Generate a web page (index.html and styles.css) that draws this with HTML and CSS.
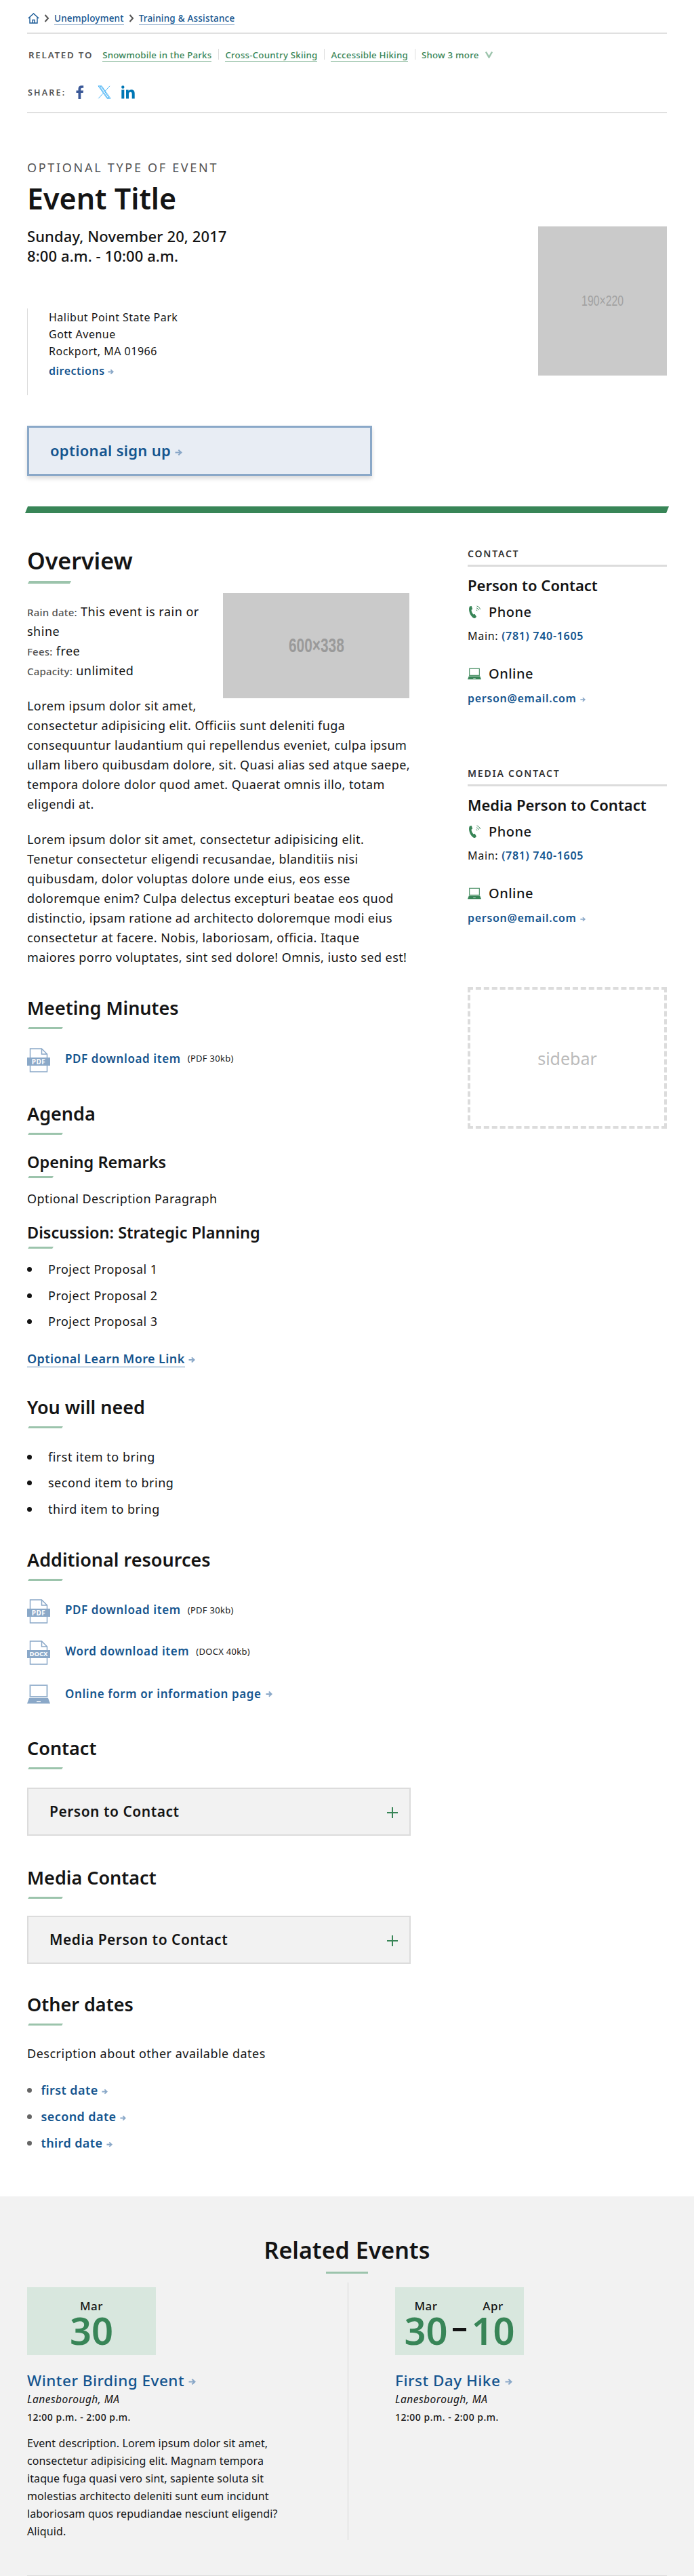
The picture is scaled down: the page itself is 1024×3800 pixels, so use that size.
FILE: index.html
```html
<!DOCTYPE html>
<html lang="en">
<head>
    <meta charset="UTF-8">
    <meta name="viewport" content="width=device-width, initial-scale=1.0">
    <title>Event Title</title>
    <link rel="stylesheet" href="styles.css">
</head>
<body>
    <svg class="sprites" width="0" height="0" aria-hidden="true">
        <symbol id="arrow" viewBox="0 0 10 10">
            <path d="M5.500.8L10 5l-4.500 4.200-1.300-1.300L6 6H.5V4H6L4.200 2.100z" fill="#8aa8c8"/>
        </symbol>
        <symbol id="chev" viewBox="0 0 8 12">
            <path d="M1.500 1l4.500 5-4.500 5" fill="none" stroke="#555" stroke-width="2"/>
        </symbol>
        <symbol id="file" viewBox="0 0 34 36">
            <path d="M4.500 14V1h17l8 8v5M29.500 25v10h-25V25M21.500 1v8h8" fill="none" stroke="#8aa8c8" stroke-width="1.500"/>
            <rect x="0" y="14" width="34" height="12" fill="#8aa8c8"/>
        </symbol>
        <symbol id="laptop" viewBox="0 0 34 30">
            <path d="M3.500 1h27v19h-27zM5.500 3v15h23V3z" fill="currentColor" fill-rule="evenodd" opacity=".85"/>
            <path d="M3 21h28l3 8H0zM14 25.500v1.500h6v-1.500z" fill="currentColor" fill-rule="evenodd"/>
        </symbol>
        <symbol id="phone" viewBox="0 0 20 20">
            <path d="M3 1.500L5.800 1l1.400 4.600-1.700 1.200c.2 2.600 1.400 5 3.200 6.700l1.800-.7 2.500 4L11 19c-2 .6-4.500-1.500-6.400-4.500C2.500 11 1 5 3 1.500z" fill="#388557"/>
            <path d="M12.500 6.500c.8.300 1.300.9 1.500 1.700M13 3.800c1.700.5 2.700 1.700 3.200 3.300M13.500 1c2.600.7 4.300 2.500 5 5" fill="none" stroke="#388557" stroke-width="1"/>
        </symbol>
    </svg>

    <div class="top">
        <nav class="crumbs">
            <svg class="home" width="17" height="16" viewBox="0 0 17 16">
                <path d="M.8 8L8.500 1l7.700 7M3 6.500V15h11V6.500M7 15v-4.500h3V15" fill="none" stroke="#1a5a96" stroke-width="1.400"/>
            </svg>
            <svg class="chev" width="8" height="12"><use href="#chev"/></svg>
            <a href="#">Unemployment</a>
            <svg class="chev" width="8" height="12"><use href="#chev"/></svg>
            <a href="#">Training &amp; Assistance</a>
        </nav>
        <div class="related">
            <span class="related-label">RELATED TO</span>
            <a href="#">Snowmobile in the Parks</a>
            <a href="#">Cross-Country Skiing</a>
            <a href="#">Accessible Hiking</a>
            <span class="more">Show 3 more
                <svg width="11" height="11" viewBox="0 0 11 11"><path d="M1 1.500l4.500 8 4.500-8" fill="none" stroke="#9cc4ac" stroke-width="2.400"/></svg>
            </span>
        </div>
        <div class="share">
            <span class="share-label">SHARE:</span>
            <svg width="12" height="20" viewBox="0 0 12 20"><path d="M3.500 20V11H.5V7.500h3V5c0-3 1.800-4.700 4.500-4.700h3.200v3.400H9.300C7.800 3.700 7.300 4.400 7.300 5.500v2h3.800L10.600 11H7.300v9z" fill="#3b5998"/></svg>
            <svg class="share-x" width="20" height="20" viewBox="0 0 20 20"><path d="M1 .8h5l13 18.400h-5zM3 1.800l11.500 16.400h2.400L5.400 1.800zM18 .8l-7.300 8M8.300 11.500L1.300 19.200" fill="none" stroke="#1da1f2" stroke-width="0.800"/></svg>
            <svg width="20" height="20" viewBox="0 0 20 20"><path d="M.3 6.500h4v13h-4zM2.300.3a2.200 2.200 0 110 4.400 2.200 2.200 0 010-4.400zM7 6.500h3.700v1.800c.7-1.200 2-2.100 4-2.100 3.800 0 5 2.300 5 6v7.300h-4v-6.500c0-1.700-.4-3.200-2.100-3.200S11 11 11 12.900v6.600H7z" fill="#0077b5"/></svg>
        </div>
    </div>

    <header class="event-head">
        <div class="event-type">OPTIONAL TYPE OF EVENT</div>
        <h1>Event Title</h1>
        <div class="event-row">
            <div class="event-info">
                <div class="event-date">Sunday, November 20, 2017<br>8:00 a.m. - 10:00 a.m.</div>
                <div class="address">
                    <div>Halibut Point State Park</div>
                    <div>Gott Avenue</div>
                    <div>Rockport, MA 01966</div>
                    <a class="link" href="#">directions <svg class="arr" width="9" height="9"><use href="#arrow"/></svg></a>
                </div>
            </div>
            <div class="ph ph-event"><span>190×220</span></div>
        </div>
        <a class="signup" href="#">optional sign up <svg class="arr" width="11" height="11"><use href="#arrow"/></svg></a>
    </header>

    <div class="green-bar"></div>

    <div class="content">
        <main>
            <h2 class="h-big">Overview</h2>
            <div class="ph ph-over"><span>600×338</span></div>
            <div class="facts">
                <div><small>Rain date:</small> This event is rain or shine</div>
                <div><small>Fees:</small> free</div>
                <div><small>Capacity:</small> unlimited</div>
            </div>
            <p>Lorem ipsum dolor sit amet, consectetur adipisicing elit. Officiis sunt deleniti fuga consequuntur laudantium qui repellendus eveniet, culpa ipsum ullam libero quibusdam dolore, sit. Quasi alias sed atque saepe, tempora dolore dolor quod amet. Quaerat omnis illo, totam eligendi at.</p>
            <p>Lorem ipsum dolor sit amet, consectetur adipisicing elit. Tenetur consectetur eligendi recusandae, blanditiis nisi quibusdam, dolor voluptas dolore unde eius, eos esse doloremque enim? Culpa delectus excepturi beatae eos quod distinctio, ipsam ratione ad architecto doloremque modi eius consectetur at facere. Nobis, laboriosam, officia. Itaque maiores porro voluptates, sint sed dolore! Omnis, iusto sed est!</p>

            <h2 class="minutes-h">Meeting Minutes</h2>
            <div class="dl">
                <span class="file-icon"><svg width="34" height="36"><use href="#file"/></svg><b>PDF</b></span>
                <a href="#">PDF download item</a> <span class="size">(PDF 30kb)</span>
            </div>

            <h2 class="agenda-h">Agenda</h2>
            <h3 class="opening-h">Opening Remarks</h3>
            <p class="desc">Optional Description Paragraph</p>
            <h3 class="discussion-h">Discussion: Strategic Planning</h3>
            <ul class="bullets">
                <li>Project Proposal 1</li>
                <li>Project Proposal 2</li>
                <li>Project Proposal 3</li>
            </ul>
            <a class="learn" href="#"><span>Optional Learn More Link</span> <svg class="arr" width="10" height="10"><use href="#arrow"/></svg></a>

            <h2 class="need-h">You will need</h2>
            <ul class="bullets need-list">
                <li>first item to bring</li>
                <li>second item to bring</li>
                <li>third item to bring</li>
            </ul>

            <h2 class="resources-h">Additional resources</h2>
            <div class="dl">
                <span class="file-icon"><svg width="34" height="36"><use href="#file"/></svg><b>PDF</b></span>
                <a href="#">PDF download item</a> <span class="size">(PDF 30kb)</span>
            </div>
            <div class="dl">
                <span class="file-icon"><svg width="34" height="36"><use href="#file"/></svg><b class="docx">DOCX</b></span>
                <a href="#">Word download item</a> <span class="size">(DOCX 40kb)</span>
            </div>
            <div class="dl dl-online">
                <span class="file-icon icon-blue"><svg width="34" height="30"><use href="#laptop"/></svg></span>
                <a href="#">Online form or information page</a> <svg class="arr" width="10" height="10"><use href="#arrow"/></svg>
            </div>

            <h2 class="contact-h">Contact</h2>
            <div class="accordion"><span>Person to Contact</span><i class="plus"></i></div>

            <h2 class="media-h">Media Contact</h2>
            <div class="accordion accordion-media"><span>Media Person to Contact</span><i class="plus"></i></div>

            <h2 class="other-h">Other dates</h2>
            <p class="other-desc">Description about other available dates</p>
            <ul class="date-links">
                <li><a href="#">first date</a> <svg class="arr" width="9" height="9"><use href="#arrow"/></svg></li>
                <li><a href="#">second date</a> <svg class="arr" width="9" height="9"><use href="#arrow"/></svg></li>
                <li><a href="#">third date</a> <svg class="arr" width="9" height="9"><use href="#arrow"/></svg></li>
            </ul>
        </main>

        <aside>
            <section class="side-block">
                <div class="side-label">CONTACT</div>
                <div class="side-name">Person to Contact</div>
                <div class="side-kind"><svg width="20" height="20"><use href="#phone"/></svg>Phone</div>
                <div class="side-line">Main: <a href="#">(781) 740-1605</a></div>
                <div class="side-kind online"><span class="icon-green"><svg width="20" height="18"><use href="#laptop"/></svg></span>Online</div>
                <div class="side-line side-mail"><a href="#">person@email.com</a> <svg class="arr" width="8" height="8"><use href="#arrow"/></svg></div>
            </section>
            <section class="side-block media">
                <div class="side-label">MEDIA CONTACT</div>
                <div class="side-name">Media Person to Contact</div>
                <div class="side-kind"><svg width="20" height="20"><use href="#phone"/></svg>Phone</div>
                <div class="side-line">Main: <a href="#">(781) 740-1605</a></div>
                <div class="side-kind online"><span class="icon-green"><svg width="20" height="18"><use href="#laptop"/></svg></span>Online</div>
                <div class="side-line side-mail"><a href="#">person@email.com</a> <svg class="arr" width="8" height="8"><use href="#arrow"/></svg></div>
            </section>
            <div class="sidebar-slot">sidebar</div>
        </aside>
    </div>

    <section class="related-events">
        <h2>Related Events</h2>
        <div class="cards">
            <article class="card">
                <div class="datebox">
                    <div class="date-col"><span>Mar</span><strong>30</strong></div>
                </div>
                <a class="card-title" href="#">Winter Birding Event <svg class="arr" width="11" height="11"><use href="#arrow"/></svg></a>
                <div class="card-place">Lanesborough, MA</div>
                <div class="card-time">12:00 p.m. - 2:00 p.m.</div>
                <p>Event description. Lorem ipsum dolor sit amet, consectetur adipisicing elit. Magnam tempora itaque fuga quasi vero sint, sapiente soluta sit molestias architecto deleniti sunt eum incidunt laboriosam quos repudiandae nesciunt eligendi? Aliquid.</p>
            </article>
            <article class="card">
                <div class="datebox">
                    <div class="date-col"><span>Mar</span><strong>30</strong></div>
                    <i class="dash"></i>
                    <div class="date-col"><span>Apr</span><strong>10</strong></div>
                </div>
                <a class="card-title" href="#">First Day Hike <svg class="arr" width="11" height="11"><use href="#arrow"/></svg></a>
                <div class="card-place">Lanesborough, MA</div>
                <div class="card-time">12:00 p.m. - 2:00 p.m.</div>
            </article>
        </div>
        <div class="end-line"></div>
    </section>
</body>
</html>
```

FILE: styles.css
```css
* {
    box-sizing: border-box;
}
html, body {
    height: 3800px;
    overflow: hidden;
}
body {
    margin: 0;
    font-family: "Noto Sans", sans-serif;
    font-size: 16px;
    color: #141414;
    background: #fff;
    letter-spacing: 0.5px;
}
a {
    color: #14558f;
    text-decoration: none;
}
.sprites {
    position: absolute;
}
.arr {
    vertical-align: middle;
}

/* top strip */
.top {
    margin: 0 40px;
}
.crumbs {
    height: 50px;
    padding-top: 17px;
    border-bottom: 2px solid #e0e0e0;
    display: flex;
    align-items: flex-start;
    font-size: 13.500px;
    font-weight: 500;
    line-height: 19px;
    letter-spacing: 0.2px;
}
.crumbs a {
    border-bottom: 1px solid #8aa8c8;
    height: 19px;
    margin-top: 1px;
}
.crumbs .home {
    margin: 2px 0 0 1px;
}
.crumbs .chev {
    margin: 4px 7px 0 7px;
}
.related {
    display: flex;
    align-items: center;
    height: 32px;
    margin-top: 15px;
    font-size: 13.300px;
    font-weight: 500;
    letter-spacing: 0.2px;
}
.related a {
    color: #388557;
    border-bottom: 1px solid #9cc4ac;
    line-height: 18px;
    margin-right: 10px;
    position: relative;
}
.related a + a,
.related .more {
    margin-left: 10px;
}
.related a::after {
    content: "";
    position: absolute;
    right: -11px;
    top: 0;
    height: 16px;
    border-right: 1px solid #ddd;
}
.related-label {
    color: #535353;
    font-weight: 600;
    letter-spacing: 1.800px;
    margin: 0 14px 0 2px;
}
.related .more {
    color: #388557;
}
.related .more svg {
    margin-left: 6px;
}
.share {
    display: flex;
    align-items: center;
    gap: 15px;
    height: 70px;
    padding-top: 10px;
    border-bottom: 2px solid #e0e0e0;
}
.share-x {
    margin-left: 5px;
}
.share-label {
    font-size: 12.500px;
    font-weight: 600;
    color: #535353;
    letter-spacing: 2.200px;
    margin-left: 1px;
}

/* event header */
.event-head {
    margin: 0 40px;
}
.event-type {
    margin-top: 68px;
    font-size: 18px;
    line-height: 24px;
    color: #535353;
    letter-spacing: 2.700px;
}
h1 {
    margin: 7px 0 0;
    font-size: 43px;
    line-height: 54px;
    font-weight: 600;
    letter-spacing: 0;
}
.event-row {
    display: flex;
    justify-content: space-between;
    align-items: flex-start;
    margin-top: 14px;
}
.event-date {
    font-size: 22px;
    line-height: 29px;
    font-weight: 500;
    letter-spacing: 0.1px;
}
.address {
    margin-top: 63px;
    height: 128px;
    padding: 1px 0 0 31px;
    border-left: 1px solid #dcdcdc;
    font-size: 16px;
    line-height: 25px;
}
.address .link {
    display: block;
    margin-top: 4px;
    font-size: 16px;
    font-weight: 600;
}
.ph {
    display: flex;
    align-items: center;
    justify-content: center;
    background: #cacaca;
    color: #a2a2a2;
    font-family: "Liberation Sans", sans-serif;
    letter-spacing: 0;
}
.ph span {
    display: inline-block;
    transform: scaleX(0.72);
}
.ph-event {
    width: 190px;
    height: 220px;
    font-size: 22px;
}
.signup {
    display: block;
    width: 509px;
    height: 74px;
    margin-top: 45px;
    padding-left: 31px;
    background: #e8edf4;
    border: 3px solid #8aa8c8;
    box-shadow: 0 4px 6px rgba(0, 0, 0, 0.15);
    font-size: 22px;
    font-weight: 600;
    line-height: 66px;
    letter-spacing: 0.3px;
}
.green-bar {
    height: 10px;
    margin: 45px 39px 0;
    background: #388557;
    transform: skewX(-22deg);
}

/* main and sidebar */
.content {
    display: grid;
    grid-template-columns: 566px 294px;
    justify-content: space-between;
    margin: 0 40px;
    height: 2483px;
}
h2 {
    margin: 0;
    font-size: 27px;
    line-height: 36px;
    font-weight: 600;
    letter-spacing: 0;
    position: relative;
    padding-bottom: 13px;
}
h2::after,
h3::after {
    content: "";
    position: absolute;
    left: 2px;
    bottom: 0;
    width: 50px;
    height: 3px;
    background: #9cc4ac;
    transform: skewX(-30deg);
}
h3 {
    margin: 0;
    font-size: 23.500px;
    line-height: 30px;
    font-weight: 600;
    letter-spacing: 0;
    position: relative;
    padding-bottom: 9px;
}
h3::after {
    width: 36px;
}
.h-big {
    margin-top: 46px;
    font-size: 34px;
    line-height: 48px;
    padding-bottom: 10px;
}
.h-big::after {
    width: 62px;
    height: 4px;
}
.ph-over {
    float: right;
    width: 275px;
    height: 155px;
    margin: 14px 2px 0 18px;
    font-size: 29px;
    font-weight: 700;
    color: #9a9a9a;
}
.facts {
    margin-top: 27px;
    font-size: 18px;
    line-height: 29px;
}
.facts small {
    font-size: 15px;
    font-weight: 500;
    line-height: 1;
    color: #535353;
    letter-spacing: 0.2px;
}
main p {
    margin: 23px 0 0;
    font-size: 18px;
    line-height: 29px;
    letter-spacing: 0.42px;
}
.minutes-h {
    margin-top: 42px;
}
.dl {
    display: flex;
    align-items: center;
    height: 36px;
    margin-top: 25px;
    font-size: 17px;
    letter-spacing: 0.6px;
}
.dl a {
    font-weight: 600;
}
.dl .size {
    font-size: 13px;
    margin-left: 10px;
    letter-spacing: 0.3px;
}
.dl .arr {
    margin-left: 6px;
}
.file-icon {
    position: relative;
    width: 34px;
    height: 36px;
    margin: 5px 22px 0 0;
    display: block;
}
.file-icon b {
    position: absolute;
    left: 0;
    right: 0;
    top: 14px;
    color: #fff;
    font-size: 10px;
    line-height: 12px;
    font-weight: 700;
    text-align: center;
    letter-spacing: 0.5px;
}
.file-icon b.docx {
    font-size: 9.500px;
    letter-spacing: 0;
}
.icon-blue {
    color: #8aa8c8;
    height: 30px;
    margin-top: 0;
}
.agenda-h {
    margin-top: 46px;
}
.opening-h {
    margin-top: 25px;
}
main p.desc {
    margin: 15.500px 0 0;
}
.discussion-h {
    margin-top: 20.500px;
}
.bullets {
    margin: 11px 0 0;
    padding: 0 0 0 31px;
    list-style: none;
    font-size: 18px;
    line-height: 38.500px;
}
.bullets li {
    position: relative;
}
.bullets li::before {
    content: "";
    position: absolute;
    left: -31px;
    top: 16px;
    width: 7px;
    height: 7px;
    background: #141414;
    border-radius: 50%;
}
.learn {
    display: block;
    margin-top: 24.500px;
    font-size: 18px;
    font-weight: 600;
    line-height: 23px;
    letter-spacing: 0.4px;
}
.learn span {
    display: inline-block;
    border-bottom: 1px solid #5f8ab5;
}
.need-h {
    margin-top: 41px;
}
.bullets.need-list {
    margin-top: 22.500px;
}
.resources-h {
    margin-top: 37.500px;
}
.dl-online {
    margin-top: 30px;
    height: 30px;
}
.contact-h {
    margin-top: 47px;
}
.accordion {
    display: flex;
    align-items: center;
    justify-content: space-between;
    height: 71px;
    margin-top: 27px;
    padding: 0 17px 0 31px;
    background: #f2f2f2;
    border: 2px solid #dcdcdc;
    font-size: 21px;
    font-weight: 600;
}
.accordion-media {
    margin-top: 25px;
}
.plus {
    width: 16px;
    height: 16px;
    margin-top: 4px;
    background: linear-gradient(#388557, #388557) center / 100% 2px no-repeat,
                linear-gradient(#388557, #388557) center / 2px 100% no-repeat;
}
.media-h {
    margin-top: 44px;
}
.other-h {
    margin-top: 42px;
}
main p.other-desc {
    margin-top: 27.500px;
    letter-spacing: 0.5px;
}
.date-links {
    margin: 20px 0 0;
    padding: 0 0 0 20.500px;
    list-style: none;
    font-size: 18px;
    line-height: 39px;
    letter-spacing: 0.4px;
}
.date-links li {
    position: relative;
}
.date-links li::before {
    content: "";
    position: absolute;
    left: -20.500px;
    top: 16px;
    width: 7px;
    height: 7px;
    border-radius: 50%;
    background: #666;
}
.date-links a {
    font-weight: 600;
}

/* aside */
aside {
    padding-top: 50px;
}
.side-label {
    font-size: 14px;
    line-height: 20px;
    height: 29px;
    font-weight: 600;
    color: #333;
    letter-spacing: 1.800px;
    border-bottom: 3px solid #dcdcdc;
}
.side-name {
    margin-top: 12px;
    font-size: 22px;
    line-height: 30px;
    font-weight: 600;
    letter-spacing: 0;
}
.side-kind {
    display: flex;
    align-items: center;
    gap: 11px;
    margin-top: 10px;
    font-size: 20px;
    font-weight: 500;
    line-height: 30px;
}
.side-kind.online {
    margin-top: 29px;
}
.icon-green {
    color: #388557;
    display: flex;
}
.side-line {
    margin-top: 8px;
    font-size: 16px;
    line-height: 24px;
    letter-spacing: 0.7px;
}
.side-line.side-mail {
    margin-top: 9px;
}
.side-line a {
    font-weight: 600;
}
.side-block.media {
    margin-top: 89px;
}
.sidebar-slot {
    height: 209px;
    margin-top: 90px;
    border: 4px dashed #dcdcdc;
    color: #bbb;
    font-size: 25px;
    letter-spacing: 0;
    display: flex;
    align-items: center;
    justify-content: center;
}

/* related events */
.related-events {
    height: 560px;
    background: #f2f2f2;
    padding: 57px 40px 0;
}
.related-events h2 {
    text-align: center;
    font-size: 34px;
    line-height: 44px;
    padding-bottom: 12.500px;
}
.related-events h2::after {
    left: 441px;
    width: 62px;
    transform: none;
}
.cards {
    display: grid;
    grid-template-columns: 473px 401px;
    justify-content: space-between;
    height: 380px;
    margin-top: 13.500px;
    position: relative;
}
.cards::before {
    content: "";
    position: absolute;
    left: 473px;
    top: 0;
    bottom: 0;
    border-left: 1px solid #d6d6d6;
}
.datebox {
    display: flex;
    align-items: center;
    justify-content: center;
    width: 190px;
    height: 100px;
    margin-top: 7px;
    background: #d8e7de;
}
.date-col {
    text-align: center;
}
.date-col span {
    display: block;
    font-size: 17px;
    font-weight: 500;
    line-height: 20px;
    margin-top: 6px;
}
.date-col strong {
    display: block;
    color: #388557;
    font-size: 56px;
    font-weight: 600;
    line-height: 50px;
    letter-spacing: 0;
}
.dash {
    width: 20px;
    height: 5px;
    margin: 25px 8px 0 7px;
    background: #141414;
}
.card-title {
    display: block;
    margin-top: 22.500px;
    font-size: 22.500px;
    font-weight: 500;
    line-height: 29px;
}
.card-place {
    font-size: 15.500px;
    font-style: italic;
    font-weight: 400;
    line-height: 26px;
}
.card-time {
    font-size: 14px;
    font-weight: 500;
    line-height: 27px;
}
.card p {
    margin: 12.500px 0 0;
    width: 385px;
    font-size: 16px;
    line-height: 26px;
    letter-spacing: 0.1px;
}
.end-line {
    margin-top: 52px;
    border-top: 2px solid #dcdcdc;
}
```
